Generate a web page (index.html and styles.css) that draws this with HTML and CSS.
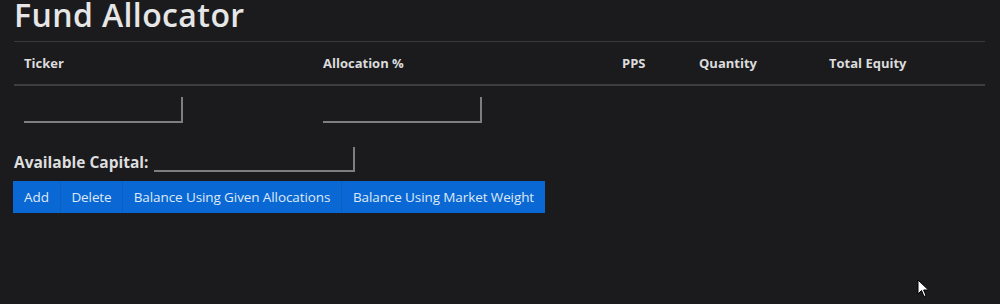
FILE: index.html
```html
<!DOCTYPE html>
<html lang="en">
<head>
    <meta charset="utf-8">
    <title>Fund Allocator</title>
    <link rel="stylesheet" href="styles.css">
</head>
<body>
<div class="main">
    <h1 class="title">Fund Allocator</h1>
    <table class="funds" cellspacing="0" cellpadding="0">
        <thead>
            <tr>
                <th class="col-ticker">Ticker</th>
                <th class="col-alloc">Allocation %</th>
                <th class="col-pps">PPS</th>
                <th class="col-qty">Quantity</th>
                <th class="col-total">Total Equity</th>
            </tr>
        </thead>
        <tbody>
            <tr>
                <td><input type="text" class="field"></td>
                <td><input type="text" class="field"></td>
                <td></td>
                <td></td>
                <td></td>
            </tr>
        </tbody>
    </table>
    <div class="capital">
        <label for="capital">Available Capital:</label>
        <input type="text" id="capital" class="field field-wide">
    </div>
    <div class="actions">
        <a class="btn btn-add">Add</a>
        <a class="btn btn-delete">Delete</a>
        <a class="btn btn-given">Balance Using Given Allocations</a>
        <a class="btn btn-market">Balance Using Market Weight</a>
    </div>
</div>
<svg class="cursor" width="13" height="19" viewBox="0 0 13 19">
    <path d="M1 1 L1 15 L4.5 11.5 L7 17.5 L9 16.6 L6.6 11 L11.5 11 Z" fill="#fff" stroke="#000" stroke-width="1"/>
</svg>
</body>
</html>
```

FILE: styles.css
```css
* {
    margin: 0;
    padding: 0;
    box-sizing: border-box;
}
html,body {
    height: 100%;
}
body {
    background-color: #1b1b1e;
    color: #e2e2e2;
    font-family: "Open Sans", "Noto Sans", sans-serif;
    overflow: hidden;
}
.main {
    padding: 0 15px 0 14px;
}
.title {
    font-size: 32px;
    font-weight: 600;
    line-height: 30px;
    letter-spacing: 0.4px;
    padding-bottom: 11px;
    border-bottom: 1px solid #3a3a3d;
    color: #e6e6e6;
}
.funds {
    width: 100%;
    border-collapse: collapse;
}
.funds th {
    text-align: left;
    font-size: 13px;
    font-weight: 700;
    height: 43px;
    padding: 0 10px;
    border-bottom: 2px solid #3e3e41;
    color: #dcdcdc;
}
.funds .col-ticker,
.funds .col-alloc {
    width: 299px;
}
.funds .col-pps {
    width: 77px;
}
.funds .col-qty {
    width: 130px;
}
.funds td {
    padding: 11px 10px 9px;
}
.field {
    display: block;
    width: 159px;
    height: 26px;
    background: transparent;
    border: none;
    border-right: 2px solid #7e7e80;
    border-bottom: 2px solid #7e7e80;
    color: #ddd;
    outline: none;
}
.capital {
    display: flex;
    align-items: flex-end;
    margin-top: 15px;
    height: 25px;
}
.capital label {
    font-size: 15.5px;
    font-weight: 700;
    color: #dedede;
    line-height: 20px;
    margin-right: 6px;
}
.field-wide {
    display: inline-block;
    width: 201px;
    height: 25px;
}
.actions {
    display: flex;
    margin-top: 9px;
    margin-left: -1px;
    width: 532px;
    height: 32px;
    background-color: #0a68d4;
}
.btn {
    display: flex;
    align-items: center;
    justify-content: center;
    flex: none;
    white-space: nowrap;
    font-size: 13.5px;
    letter-spacing: -0.1px;
    color: #dfe8f6;
    border-right: 1px solid #0b5fc0;
}
.btn-add {
    width: 48px;
}
.btn-delete {
    width: 62px;
}
.btn-given {
    width: 219px;
}
.btn-market {
    width: 203px;
    border-right: none;
}
.cursor {
    position: absolute;
    left: 917px;
    top: 279px;
}
```
